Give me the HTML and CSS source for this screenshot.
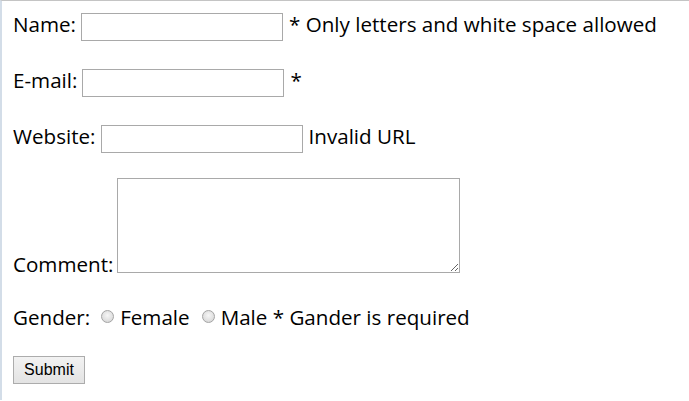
FILE: index.html
```html
<!DOCTYPE html>
<html>
<head>
<meta charset="utf-8">
<link rel="stylesheet" href="styles.css">
</head>
<body>
<form class="form">
  <div class="row row-name">
    <span class="label">Name:</span>
    <input class="field" type="text">
    <span class="note">* Only letters and white space allowed</span>
  </div>
  <div class="row row-email">
    <span class="label">E-mail:</span>
    <input class="field" type="text">
    <span class="note">*</span>
  </div>
  <div class="row row-web">
    <span class="label">Website:</span>
    <input class="field" type="text">
    <span class="note">Invalid URL</span>
  </div>
  <div class="row row-comment">
    <span class="label">Comment:</span>
    <textarea class="area"></textarea>
  </div>
  <div class="row row-gender">
    <span class="label">Gender:</span>
    <input class="radio" type="radio" name="g">
    <span class="opt">Female</span>
    <input class="radio radio-male" type="radio" name="g">
    <span class="opt">Male * Gander is required</span>
  </div>
  <div class="row row-submit">
    <button class="submit" type="button">Submit</button>
  </div>
</form>
</body>
</html>
```
FILE: styles.css
```css
html, body {
  margin: 0;
  padding: 0;
  background: #ffffff;
}
body {
  border-top: 1px solid #c4c4c4;
  border-left: 2px solid #d3dde8;
  min-height: 400px;
  box-sizing: border-box;
  font-family: "Open Sans", "Noto Sans", sans-serif;
  font-size: 20.6px;
  color: #000;
}
.form {
  padding: 12px 0 0 11px;
}
.row {
  display: flex;
  align-items: center;
  height: 28px;
}
.label, .note, .opt {
  padding-bottom: 6px;
}
.label {
  margin-right: 5px;
}
.field {
  box-sizing: border-box;
  width: 202px;
  height: 28px;
  border: 1px solid #a9a9a9;
  margin: 0 6px 0 0;
  padding: 0;
  background: #fff;
  outline: none;
}
.row-email, .row-web {
  margin-top: 28px;
}
.row-comment {
  margin-top: 25px;
  height: 95px;
  align-items: flex-end;
}
.row-comment .label {
  line-height: 1;
  padding-bottom: 0;
  margin-bottom: -2px;
  margin-right: 4px;
}
.area {
  box-sizing: border-box;
  width: 343px;
  height: 95px;
  border: 1px solid #a9a9a9;
  margin: 0;
  padding: 0;
  resize: both;
}
.row-gender {
  margin-top: 33px;
}
.radio {
  appearance: none;
  -webkit-appearance: none;
  box-sizing: border-box;
  width: 13px;
  height: 13px;
  border-radius: 50%;
  border: 1px solid #a4a4a4;
  background: radial-gradient(circle at 50% 40%, #f6f6f6 0%, #dedede 65%, #cdcdcd 100%);
  margin: 0 6px 8px 6px;
}
.radio-male {
  margin-left: 12px;
}
.row-submit {
  margin-top: 22px;
}
.submit {
  box-sizing: border-box;
  width: 72px;
  height: 28px;
  font-family: "Liberation Sans", Arial, sans-serif;
  font-size: 16px;
  color: #000;
  border: 1px solid #acacac;
  border-radius: 0;
  background: linear-gradient(#f2f2f2, #e3e3e3);
  padding: 0;
}
```
